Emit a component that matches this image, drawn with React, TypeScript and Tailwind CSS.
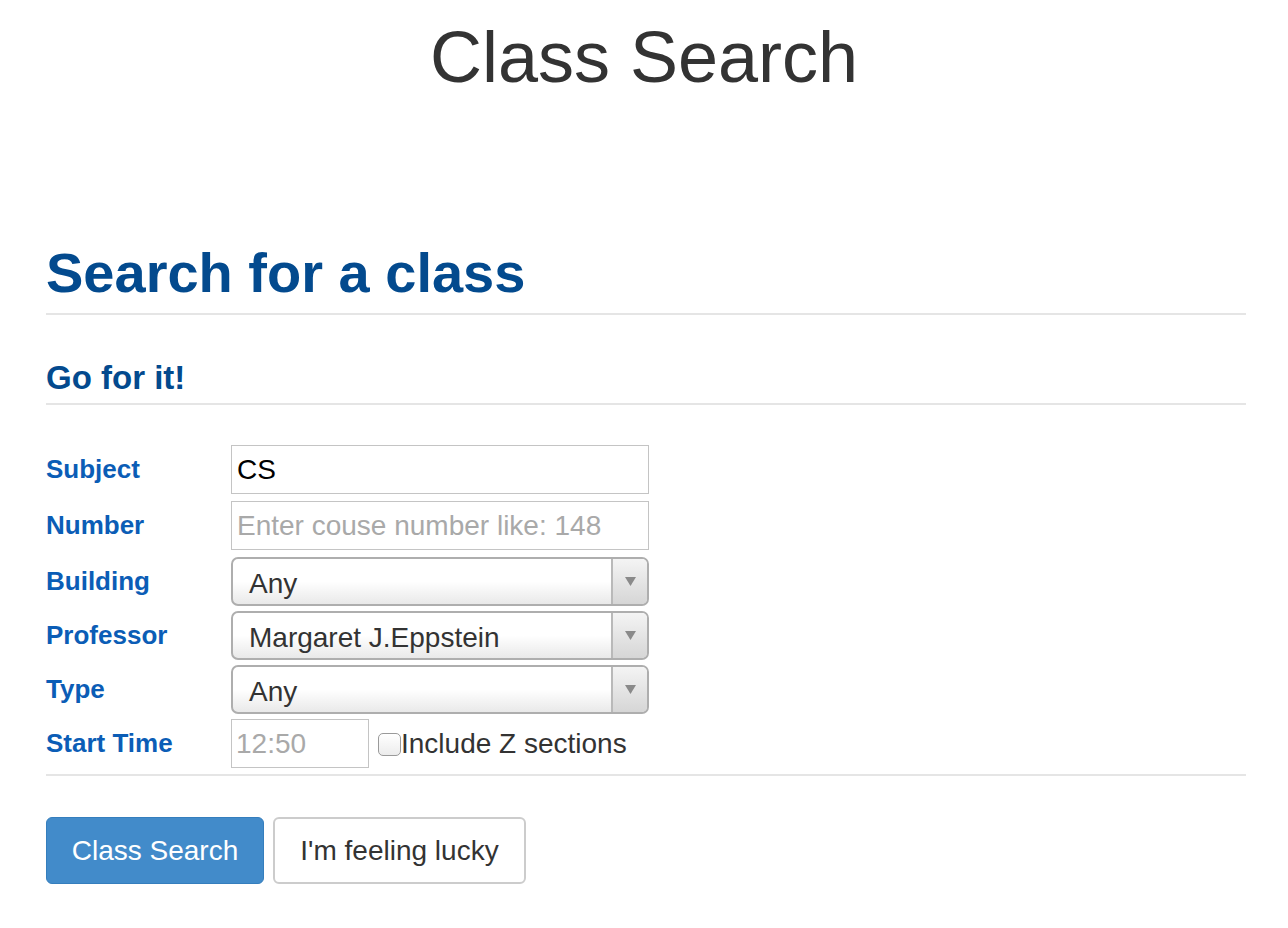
import React from 'react';

const font = "font-['Liberation_Sans','Helvetica_Neue',Arial,sans-serif]";

const FakeSelect: React.FC<{ value: string }> = ({ value }) => (
  <div className="flex h-[49px] w-[418px] overflow-hidden rounded-[7px] border-2 border-[#aeaeae] bg-gradient-to-b from-white via-white to-[#e9e9e9]">
    <div className="flex flex-1 items-center pl-[16px] pt-[4px] text-[28px] text-[#333]">{value}</div>
    <div className="flex w-[36px] items-center justify-center border-l-2 border-[#b9b9b9] bg-gradient-to-b from-[#f4f4f4] to-[#d6d6d6]">
      <svg width="11" height="9" viewBox="0 0 11 9">
        <path d="M0 0 L11 0 L5.5 9 Z" fill="#8a8a8a" />
      </svg>
    </div>
  </div>
);

const Row: React.FC<{ label: string; className?: string; children: React.ReactNode }> = ({ label, className = '', children }) => (
  <div className={`flex items-center ${className}`}>
    <div className="w-[185px] text-[26px] font-bold text-[#0b5db6]">{label}</div>
    {children}
  </div>
);

export default function App() {
  return (
    <div className={`${font} min-h-screen bg-white`}>
      <h1 className="mt-[21px] text-center text-[72px] leading-none text-[#333]">Class Search</h1>

      <div className="ml-[46px] mr-[42px] pt-[152px]">
        <h2 className="border-b-2 border-[#e5e5e5] pb-[12px] text-[56px] font-bold leading-none text-[#034a8e]">
          Search for a class
        </h2>

        <h3 className="mt-[46px] border-b-2 border-[#e5e5e5] pb-[9px] text-[33px] font-bold leading-none text-[#034a8e]">
          Go for it!
        </h3>

        <form className="mt-[40px] flex flex-col">
          <Row label="Subject" className="mb-[7px]">
            <input
              defaultValue="CS"
              className="h-[49px] w-[418px] border border-[#c4c4c4] px-[5px] text-[28px] text-black outline-none"
            />
          </Row>
          <Row label="Number" className="mb-[7px]">
            <input
              placeholder="Enter couse number like: 148"
              className="h-[49px] w-[418px] border border-[#c4c4c4] px-[5px] text-[28px] text-black outline-none placeholder:text-[#a9a9a9]"
            />
          </Row>
          <Row label="Building" className="mb-[5px]">
            <FakeSelect value="Any" />
          </Row>
          <Row label="Professor" className="mb-[5px]">
            <FakeSelect value="Margaret J.Eppstein" />
          </Row>
          <Row label="Type" className="mb-[5px]">
            <FakeSelect value="Any" />
          </Row>
          <Row label="Start Time">
            <input
              placeholder="12:50"
              className="h-[49px] w-[138px] border border-[#c4c4c4] px-[4px] text-[28px] text-black outline-none placeholder:text-[#a9a9a9]"
            />
            <label className="ml-[9px] flex items-center text-[28px] text-[#333]">
              <span className="mt-[1px] inline-block h-[23px] w-[23px] rounded-[5px] border border-[#9a9a9a] bg-gradient-to-b from-white to-[#ececec]" />
              <span>Include Z sections</span>
            </label>
          </Row>
        </form>

        <div className="mt-[6px] border-t-2 border-[#e5e5e5]" />

        <div className="mt-[41px] flex gap-[9px]">
          <button className="h-[67px] w-[218px] rounded-[6px] border border-[#357ebd] bg-[#428bca] text-[28px] text-white">
            Class Search
          </button>
          <button className="h-[67px] w-[253px] rounded-[6px] border-2 border-[#cccccc] bg-white text-[28px] text-[#333]">
            I'm feeling lucky
          </button>
        </div>
      </div>
    </div>
  );
}
